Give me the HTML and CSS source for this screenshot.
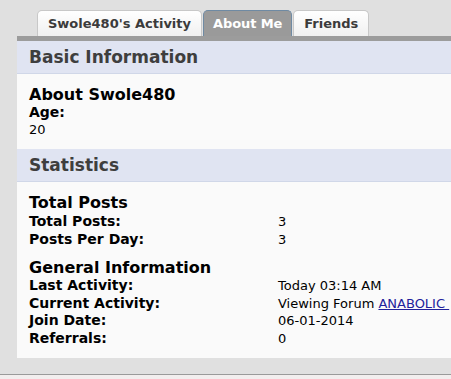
FILE: index.html
```html
<!DOCTYPE html>
<html>
<head>
<meta charset="utf-8">
<link rel="stylesheet" href="styles.css">
</head>
<body>
<div class="page">
  <div class="tabs">
    <div class="tab">Swole480's Activity</div>
    <div class="tab active">About Me</div>
    <div class="tab">Friends</div>
  </div>
  <div class="bar"></div>
  <div class="panel">
    <div class="section-head">Basic Information</div>
    <div class="block basic">
      <div class="block-title">About Swole480</div>
      <div class="label">Age:</div>
      <div class="value">20</div>
    </div>
    <div class="section-head">Statistics</div>
    <div class="block stats">
      <div class="block-title">Total Posts</div>
      <div class="row tall"><span class="label">Total Posts:</span><span class="value">3</span></div>
      <div class="row tall"><span class="label">Posts Per Day:</span><span class="value">3</span></div>
      <div class="block-title second">General Information</div>
      <div class="row"><span class="label">Last Activity:</span><span class="value">Today 03:14 AM</span></div>
      <div class="row"><span class="label">Current Activity:</span><span class="value">Viewing Forum <a href="#">ANABOLIC&nbsp;</a></span></div>
      <div class="row"><span class="label">Join Date:</span><span class="value">06-01-2014</span></div>
      <div class="row"><span class="label">Referrals:</span><span class="value">0</span></div>
    </div>
  </div>
</div>
<div class="footer"></div>
</body>
</html>
```

FILE: styles.css
```css
html, body {
  margin: 0;
  padding: 0;
  background: #f2eeee;
  overflow: hidden;
}
body {
  font-family: "DejaVu Sans", Verdana, sans-serif;
  color: #000;
}
.page {
  background: #e0e0e0;
  height: 374px;
  overflow: hidden;
}
.footer {
  height: 1px;
  background: #9a9a9a;
}
.tabs {
  display: flex;
  gap: 1px;
  padding: 10px 0 0 37px;
  height: 26px;
}
.tab {
  box-sizing: border-box;
  height: 26px;
  padding: 0 10px;
  line-height: 25px;
  font-size: 13px;
  font-weight: bold;
  color: #3b3b3b;
  background: linear-gradient(#ffffff, #f0f0f0);
  border: 1px solid #c8c8c8;
  border-bottom: none;
  border-radius: 5px 5px 0 0;
  white-space: nowrap;
}
.tab.active {
  background: #9a9a9a;
  color: #fff;
  border-color: #6f8aa3;
  padding: 0 9px;
  letter-spacing: -0.1px;
}
.bar {
  margin-left: 17px;
  height: 5px;
  background: #9c9c9c;
}
.panel {
  margin-left: 17px;
  background: #fafafa;
}
.section-head {
  box-sizing: border-box;
  height: 33px;
  padding-left: 12px;
  line-height: 32px;
  font-size: 17px;
  font-weight: bold;
  color: #3e3e3e;
  background: #e0e4f2;
  border-bottom: 1px solid #d0d7e8;
}
.block {
  padding: 12px 12px 11px;
  font-size: 13px;
  line-height: 17px;
}
.block-title {
  font-size: 16px;
  font-weight: bold;
  line-height: 18px;
}
.block-title.second {
  margin-top: 10px;
  line-height: 19px;
}
.label {
  font-weight: bold;
  font-size: 14px;
}
.value {
  font-size: 13px;
}
.row {
  display: grid;
  grid-template-columns: 249px 1fr;
  align-items: baseline;
  white-space: nowrap;
  line-height: 17.5px;
  height: 17.5px;
}
.row.tall {
  line-height: 18px;
  height: 18px;
}
.row .value a {
  color: #22229c;
}
```
